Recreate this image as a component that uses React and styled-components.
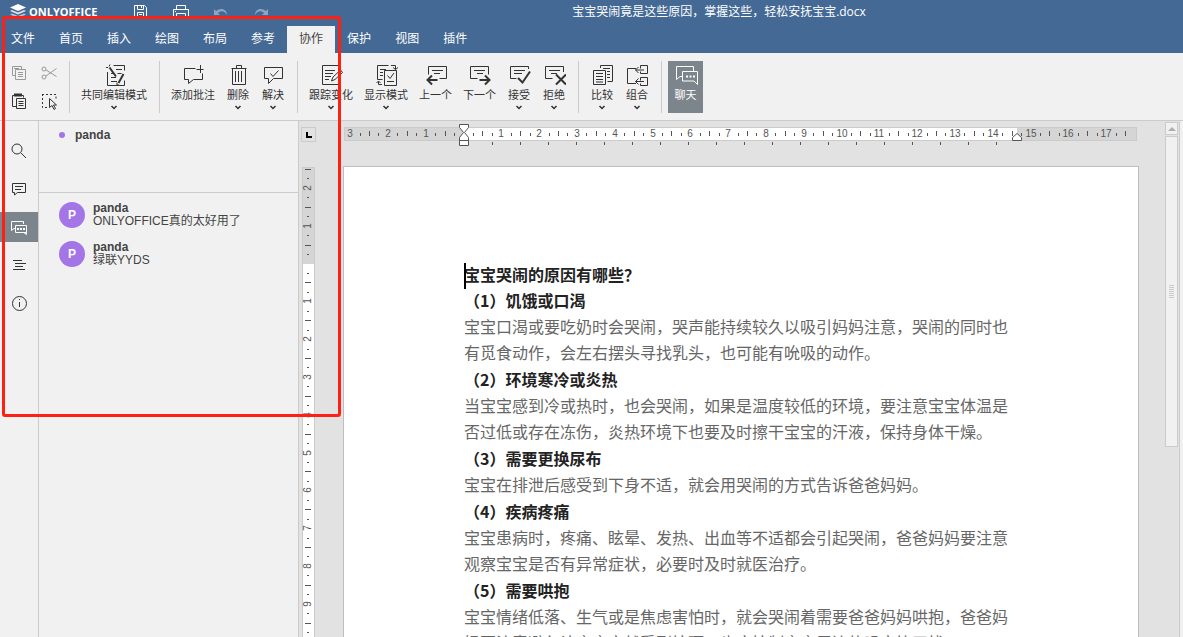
import React from "react"
import styled, { createGlobalStyle } from "styled-components"

const GlobalStyle = createGlobalStyle`
* {
    box-sizing: border-box;
}
body {
    margin: 0;
    background: #f1f1f1;
    color: #444;
    font: 12px "Liberation Sans", "Noto Sans CJK SC", sans-serif;
}
button {
    border: 0;
    padding: 0;
    background: none;
    color: inherit;
    font: inherit;
}
h1, h2, p, ul {
    margin: 0;
    padding: 0;
}
svg {
    display: block;
    fill: none;
    stroke: currentColor;
}
`

const TABS = ["文件", "首页", "插入", "绘图", "布局", "参考", "协作", "保护", "视图", "插件"]

const MESSAGES = [
    { user: "panda", text: "ONLYOFFICE真的太好用了" },
    { user: "panda", text: "绿联YYDS" },
]

const SECTIONS = [
    {
        title: "（1）饥饿或口渴",
        text: "宝宝口渴或要吃奶时会哭闹，哭声能持续较久以吸引妈妈注意，哭闹的同时也有觅食动作，会左右摆头寻找乳头，也可能有吮吸的动作。",
    },
    {
        title: "（2）环境寒冷或炎热",
        text: "当宝宝感到冷或热时，也会哭闹，如果是温度较低的环境，要注意宝宝体温是否过低或存在冻伤，炎热环境下也要及时擦干宝宝的汗液，保持身体干燥。",
    },
    {
        title: "（3）需要更换尿布",
        text: "宝宝在排泄后感受到下身不适，就会用哭闹的方式告诉爸爸妈妈。",
    },
    {
        title: "（4）疾病疼痛",
        text: "宝宝患病时，疼痛、眩晕、发热、出血等不适都会引起哭闹，爸爸妈妈要注意观察宝宝是否有异常症状，必要时及时就医治疗。",
    },
    {
        title: "（5）需要哄抱",
        text: "宝宝情绪低落、生气或是焦虑害怕时，就会哭闹着需要爸爸妈妈哄抱，爸爸妈妈要注意避免让宝宝突然受到惊吓，也应控制宝宝周边的噪音等干扰。",
    },
]

// 24x24 toolbar drawings
const icons = {
    coedit: (
        <>
            <path d="M11.5 2.5h11v5M5.5 9v13.5h17v-5M9 10.5h3M14 6.5h6M9 14.5h5M9 18.5h6M15.5 10.5h4" />
            <path d="M7.5 4.5l6.5 9M16.500 20l5-9" strokeWidth="2" />
            <path d="M4 4.5h2M8 1.5l-1 2M15 19.500v2.500h2" />
        </>
    ),
    addComment: <path d="M14.5 5.5h-11v11h4v4l5-4h9v-6M19.5 2v8M15.5 6.5h7" />,
    trash: <path d="M5.5 5.5h15M10.5 5.5v-3h5v3M6.5 5.5v16h13v-16M9.5 8v11M12.5 8v11M15.5 8v11" />,
    resolve: <path d="M3.5 4.5h18v11h-9l-5 5v-5h-4zM9.5 10.5l2.5 3 5.5-6" />,
    track: (
        <>
            <path d="M20.5 7v-4.5h-17v19h17v-5M6 7.5h10M6 10.5h8M6 13.5h6M6 16.5h4" />
            <path d="M12.5 18l1.5-4 7.5-7 2 2.500-7.500 7zM19.500 8.500l2.500 2.500" />
        </>
    ),
    display: (
        <path d="M14.5 2.5h-11v14h5M6 6.5h6M6 9.5h3M6 12.5h3M10.5 7.5h12v15h-12zM13.5 12.5l2.5 3 4-5.5M13 18.5h7M17 2.5h4.5v4M19 4.5l2.500 2 2.500-2M8 21.500h-3.500v-3M2.500 20l2-2 2 2" />
    ),
    prev: (
        <>
            <path d="M4.5 11.5v-8h18v12h-7M8 7.5h11M10 10.5h6" />
            <path d="M13.5 17h-10M8 12.5l-4.500 4.500 4.500 4.500" strokeWidth="2" />
        </>
    ),
    next: (
        <>
            <path d="M20.5 11.5v-8h-18v12h7M6 7.5h11M9 10.5h6" />
            <path d="M11.5 17h10M17 12.5l4.500 4.500-4.500 4.500" strokeWidth="2" />
        </>
    ),
    accept: (
        <>
            <path d="M21.5 6v-2.500h-18v12h6M7 7.500h11M7 10.500h8" />
            <path d="M11 15l4.500 4.500 7.500-11" strokeWidth="2" />
        </>
    ),
    reject: (
        <>
            <path d="M21.5 9v-5.500h-18v12h7M7 7.500h11M9 10.500h6" />
            <path d="M14 11.500l10 10M24 11.500l-10 10" strokeWidth="2" />
        </>
    ),
    compare: <path d="M10.5 5v-2.500h12v16h-5M13 5.500h7M17 8.500h3M17 11.500h3M17 14.500h3M3.500 7.500h12v14h-12zM6 10.500h7M6 13.500h7M6 16.500h7M6 19h7" />,
    combine: <path d="M11 5.500h-8.500v15h8.500M15.500 5.500v-3h7v8h-7v-2M15.500 17.500v-3h7v8h-7v-2M19 7h-8.500M13.500 4l-3 3 3 3M19 18.500h-8.500M13.500 15.500l-3 3 3 3" />,
    chat: (
        <>
            <path d="M19.500 8v-4.500h-17v13l3.500-3h2.500M8.500 8.500h15v13l-3.500-3.500h-11.500z" />
            <path d="M12 13.500h2M15.500 13.500h2M19 13.500h2" strokeWidth="2" />
        </>
    ),
}

const TOOL_GROUPS = [
    [{ icon: "coedit", label: "共同编辑模式", menu: true }],
    [
        { icon: "addComment", label: "添加批注" },
        { icon: "trash", label: "删除", menu: true },
        { icon: "resolve", label: "解决", menu: true },
    ],
    [
        { icon: "track", label: "跟踪变化", menu: true },
        { icon: "display", label: "显示模式", menu: true },
        { icon: "prev", label: "上一个" },
        { icon: "next", label: "下一个" },
        { icon: "accept", label: "接受", menu: true },
        { icon: "reject", label: "拒绝", menu: true },
    ],
    [
        { icon: "compare", label: "比较", menu: true },
        { icon: "combine", label: "组合", menu: true },
    ],
    [{ icon: "chat", label: "聊天", active: true }],
]

const SIDE_ITEMS = [
    { name: "查找", draw: <><circle cx="8" cy="8" r="5" /><path d="M12 12l5 5" /></> },
    { name: "批注", draw: <path d="M3.5 4.5h13v9h-8l-3 2.5v-2.5h-2zM6 7.5h8M6 10.5h6" /> },
    {
        name: "聊天",
        active: true,
        draw: (
            <>
                <path d="M14.5 7v-2.5h-12v9l2.500-2h1.500M6.500 8.500h11v7h-11zM14.500 15.500l3 2v-2" />
                <path d="M8 12h2M11 12h2M14 12h2" strokeWidth="2" />
            </>
        ),
    },
    { name: "标题", draw: <path d="M4 5.500h9M6 8.500h11M6 11.500h8M4 14.500h12" /> },
    { name: "关于", draw: <><circle cx="10.5" cy="10.5" r="7" /><path d="M10.5 9v5M10.500 6v1" /></> },
]

const App = () => (
    <Editor>
        <GlobalStyle />
        <Header>
            <TitleRow>
                <Logo>
                    <svg width="16" height="16" viewBox="0 0 16 16">
                        <g fill="#fff" stroke="none">
                            <path d="M8 1l8 3.500-8 3.500-8-3.500z" />
                            <path d="M0 8l2-1 6 2.500 6-2.500 2 1-8 3.500z" opacity=".8" />
                            <path d="M0 11.500l2-1 6 2.500 6-2.500 2 1-8 3.500z" opacity=".6" />
                        </g>
                    </svg>
                    ONLYOFFICE
                </Logo>
                <QuickButtons>
                    <button aria-label="保存">
                        <svg width="18" height="18" viewBox="0 0 18 18">
                            <path d="M2.500 2.500h10l2 2v11h-12zM5.500 2.500v4h6v-4M9.500 3v2M5.500 15.500v-6h6v6M7 11.500h3M7 13.500h3" />
                        </svg>
                    </button>
                    <button aria-label="打印">
                        <svg width="18" height="18" viewBox="0 0 18 18">
                            <path d="M4.500 6.500v-4h9v4M4.500 13.500h-3v-7h15v7h-3M4.500 10.500h9v5h-9zM3 8.500h1" />
                        </svg>
                    </button>
                    <button aria-label="撤销" disabled>
                        <svg width="18" height="18" viewBox="0 0 18 18">
                            <path d="M2 6v6h6L6 10c3-3 7-2 9 2 0-6-6-8-11-4z" fill="currentColor" stroke="none" />
                        </svg>
                    </button>
                    <button aria-label="重做" disabled>
                        <svg width="18" height="18" viewBox="0 0 18 18">
                            <path d="M16 6v6h-6l2-2c-3-3-7-2-9 2 0-6 6-8 11-4z" fill="currentColor" stroke="none" />
                        </svg>
                    </button>
                </QuickButtons>
                <DocName>宝宝哭闹竟是这些原因，掌握这些，轻松安抚宝宝.docx</DocName>
            </TitleRow>
            <Tabs>
                {TABS.map((tab) => <Tab key={tab} $active={tab === "协作"}>{tab}</Tab>)}
            </Tabs>
        </Header>

        <Toolbar>
            <ClipboardGroup>
                <SmallButton aria-label="复制" disabled>
                    <svg width="20" height="20" viewBox="0 0 20 20">
                        <path d="M6 12.500h-2.500v-9h9v2.500M6.500 6.500h10v10h-10zM5 5.500h5M9 9.500h5M9 11.500h5M9 13.500h5" />
                    </svg>
                </SmallButton>
                <SmallButton aria-label="剪切" disabled>
                    <svg width="20" height="20" viewBox="0 0 20 20">
                        <circle cx="5" cy="6" r="2" />
                        <circle cx="5" cy="14" r="2" />
                        <path d="M7 7l10.500 6.500M7 13l10.500-7.500" />
                    </svg>
                </SmallButton>
                <SmallButton aria-label="粘贴">
                    <svg width="20" height="20" viewBox="0 0 20 20">
                        <path d="M7 15.500h-3.500v-11h11v2M7.500 7.500h9v10h-9zM9.500 10.500h5M9.500 12.500h5M9.500 14.500h5" />
                        <path d="M5 4h8" strokeWidth="3" />
                    </svg>
                </SmallButton>
                <SmallButton aria-label="全选">
                    <svg width="20" height="20" viewBox="0 0 20 20">
                        <path d="M3 3.500h14v4M3.500 3v13.500h6" strokeDasharray="2 2" />
                        <path d="M10.500 7.500v9l2.500-2 2 4 1.500-1-2-3.500h3z" />
                    </svg>
                </SmallButton>
            </ClipboardGroup>
            {TOOL_GROUPS.map((group, i) => (
                <ToolGroup key={i}>
                    {group.map((tool) => (
                        <ToolButton key={tool.label} $active={tool.active}>
                            <svg width="24" height="24" viewBox="0 0 24 24">{icons[tool.icon]}</svg>
                            <span>{tool.label}</span>
                            {tool.menu && (
                                <svg width="8" height="5" viewBox="0 0 8 5"><path d="M1.5 1L4 3.500 6.500 1" strokeWidth="1.500" /></svg>
                            )}
                        </ToolButton>
                    ))}
                </ToolGroup>
            ))}
        </Toolbar>

        <Body>
            <SideMenu>
                {SIDE_ITEMS.map((item) => (
                    <SideButton key={item.name} aria-label={item.name} $active={item.active}>
                        <svg width="20" height="20" viewBox="0 0 20 20">{item.draw}</svg>
                    </SideButton>
                ))}
            </SideMenu>
            <ChatPanel>
                <Users>
                    <User>panda</User>
                </Users>
                <Messages>
                    {MESSAGES.map((m) => (
                        <Message key={m.text}>
                            <Avatar>P</Avatar>
                            <div>
                                <b>{m.user}</b>
                                <p>{m.text}</p>
                            </div>
                        </Message>
                    ))}
                </Messages>
            </ChatPanel>
            <RulerColumn>
                <TabStop aria-label="制表符">
                    <svg width="6" height="6" viewBox="0 0 6 6"><path d="M1 0v5h5" stroke="#000" strokeWidth="2" /></svg>
                </TabStop>
                <VerticalRuler />
            </RulerColumn>
            <Canvas>
                <HorizontalRuler />
                <Page>
                    <Caret />
                    <h1>宝宝哭闹的原因有哪些？</h1>
                    {SECTIONS.map((s) => (
                        <Section key={s.title}>
                            <h2>{s.title}</h2>
                            <p>{s.text}</p>
                        </Section>
                    ))}
                </Page>
            </Canvas>
            <ScrollBar>
                <ScrollUp aria-label="向上滚动">
                    <svg width="8" height="4" viewBox="0 0 8 4"><path d="M4 0l4 4H0z" fill="#adadad" stroke="none" /></svg>
                </ScrollUp>
                <Thumb>
                    <svg width="5" height="13" viewBox="0 0 5 13">
                        <path d="M0 .5h5M0 2.5h5M0 4.5h5M0 6.5h5M0 8.5h5M0 10.5h5M0 12.5h5" />
                    </svg>
                </Thumb>
            </ScrollBar>
            <RightEdge />
        </Body>
        <Highlight />
    </Editor>
)

export default App

const CM = 37.8

// every quarter of a centimetre from first to last: number, long or short tick
function rulerMarks(first, last) {
    const marks = []
    for (let q = first * 4; q <= last * 4; q++) {
        if (q === 0) continue
        const kind = q % 4 === 0 ? "number" : q % 2 === 0 ? "long" : "short"
        marks.push({ kind, pos: Math.floor((q * CM) / 4), n: Math.abs(q / 4) })
    }
    return marks
}

function HorizontalRuler() {
    const zero = 121
    return (
        <RulerSvg width="796" height="30" viewBox="0 0 796 30">
            <rect x="1.5" y="6.5" width="792" height="13" fill="#d5d5d5" stroke="#cbcbcb" />
            <rect x={zero} y="7" width="553" height="12" fill="#fff" />
            {rulerMarks(-3, 17.5).map((m) =>
                m.kind === "number" ? (
                    <text key={m.pos} x={zero + m.pos} y="16" textAnchor="middle">{m.n}</text>
                ) : (
                    <rect key={m.pos} x={zero + m.pos} y={m.kind === "long" ? 10 : 12} width="1" height={m.kind === "long" ? 5 : 3} fill="#555" />
                )
            )}
            {Array.from({ length: 19 }, (_, i) => (
                <rect key={i} x={zero + (i + 1) * 28} y="21" width="1" height="3" fill="#555" />
            ))}
            <path d="M116.5 3.5h9v3l-4 5 4 5v3h-9v-3l4-5-4-5zM116.5 19.5h9v5h-9z" fill="#fff" stroke="#555" />
            <path d="M669.5 19.5v-3l4.5-4 4.5 4v3z" fill="#fff" stroke="#555" />
        </RulerSvg>
    )
}

function VerticalRuler() {
    const zero = 97
    // only the part that the window can show
    const height = Math.max(zero, window.innerHeight - 167)
    const last = Math.floor(((height - zero - 4) / CM) * 4) / 4
    return (
        <RulerSvg width="13" height={height}>
            <rect x=".5" y=".5" width="12" height="1122" fill="#d5d5d5" stroke="#cbcbcb" />
            <rect x="1" y={zero} width="11" height="930" fill="#fff" />
            {rulerMarks(-2.5, Math.min(last, 24)).map((m) =>
                m.kind === "number" ? (
                    <text key={m.pos} transform={`translate(9 ${zero + m.pos}) rotate(-90)`} textAnchor="middle">{m.n}</text>
                ) : (
                    <rect key={m.pos} x={m.kind === "long" ? 3 : 5} y={zero + m.pos} width={m.kind === "long" ? 6 : 2} height="1" fill="#555" />
                )
            )}
        </RulerSvg>
    )
}

const Editor = styled.div`
position: relative;
display: flex;
flex-direction: column;
height: 100vh;
overflow: hidden;
`

const Header = styled.header`
flex: none;
background: #446995;
color: #fff;
`

const TitleRow = styled.div`
display: flex;
height: 26px;
padding-left: 10px;
`

const Logo = styled.div`
display: flex;
align-items: center;
gap: 3px;
width: 122px;
height: 22px;
font: bold 11px "Open Sans", sans-serif;
`

const QuickButtons = styled.div`
display: flex;
gap: 22px;
height: 24px;
button {
    width: 18px;
}
button:disabled {
    opacity: .4;
}
`

const DocName = styled.div`
flex: 1;
padding-right: 15px;
line-height: 24px;
text-align: center;
font-family: "Open Sans", "Noto Sans CJK SC", sans-serif;
`

const Tabs = styled.nav`
display: flex;
margin-left: -1px;
`

const Tab = styled.button`
height: 27px;
padding: 0 12px 1px;
line-height: 24px;
background: ${(props) => (props.$active ? "#f1f1f1" : "none")};
color: ${(props) => (props.$active ? "#444" : "#fff")};
`

const Toolbar = styled.div`
display: flex;
flex: none;
align-items: flex-start;
height: 68px;
padding-top: 8px;
border-bottom: 1px solid #cbcbcb;
`

const ClipboardGroup = styled.div`
display: grid;
grid-template-columns: 20px 20px;
gap: 8px 10px;
height: 52px;
padding: 2px 10px 2px 9px;
border-right: 1px solid #cbcbcb;
`

const SmallButton = styled.button`
height: 20px;
color: ${(props) => (props.disabled ? "#999" : "#333")};
`

const ToolGroup = styled.div`
display: flex;
gap: 1px;
height: 52px;
padding: 0 7px 0 6px;
border-right: 1px solid #cbcbcb;
&:last-child {
    border-right: 0;
}
`

const ToolButton = styled.button`
display: flex;
flex-direction: column;
align-items: center;
min-width: ${(props) => (props.$active ? "35px" : "34px")};
height: 52px;
padding: 2px 5px 0;
background: ${(props) => (props.$active ? "#7d858c" : "none")};
color: ${(props) => (props.$active ? "#fff" : "#333")};
span {
    margin: 1px 0 3px;
    font-size: 11px;
    line-height: 14px;
    white-space: nowrap;
}
`

const Body = styled.div`
display: flex;
flex: 1;
min-height: 0;
`

const SideMenu = styled.nav`
display: flex;
flex-direction: column;
gap: 8px;
width: 39px;
padding-top: 15px;
border-right: 1px solid #cbcbcb;
`

const SideButton = styled.button`
height: 30px;
padding-left: 9px;
background: ${(props) => (props.$active ? "#7d858c" : "none")};
color: ${(props) => (props.$active ? "#fff" : "#333")};
`

const ChatPanel = styled.aside`
width: 260px;
border-right: 1px solid #cbcbcb;
`

const Users = styled.ul`
height: 72px;
padding: 7px 20px;
border-bottom: 1px solid #cbcbcb;
list-style: none;
`

const User = styled.li`
display: flex;
align-items: center;
gap: 10px;
font-weight: bold;
line-height: 14px;
&::before {
    content: "";
    width: 6px;
    height: 6px;
    border-radius: 50%;
    background: #a375e6;
}
`

const Messages = styled.div`
display: flex;
flex-direction: column;
gap: 13px;
padding: 9px 20px;
`

const Message = styled.div`
display: flex;
gap: 8px;
height: 26px;
line-height: 13px;
b {
    display: block;
}
`

const Avatar = styled.div`
width: 26px;
height: 26px;
border-radius: 50%;
background: #a375e6;
color: #fff;
font-weight: bold;
line-height: 26px;
text-align: center;
`

const RulerColumn = styled.div`
display: flex;
flex-direction: column;
align-items: flex-start;
gap: 25px;
width: 18px;
padding: 6px 0 0 2px;
overflow: hidden;
background: #e2e2e2;
> svg {
    margin-left: 1px;
}
`

const TabStop = styled.button`
display: flex;
flex: none;
align-items: center;
justify-content: center;
width: 15px;
height: 15px;
border: 1px solid #cbcbcb;
`

const RulerSvg = styled.svg`
flex: none;
stroke: none;
shape-rendering: crispEdges;
text {
    fill: #555;
    font-size: 10px;
}
path {
    shape-rendering: auto;
}
`

const Canvas = styled.main`
display: flex;
flex: 1;
flex-direction: column;
align-items: center;
gap: 15px;
min-width: 0;
overflow: hidden;
background: #e2e2e2;
`

const Page = styled.article`
position: relative;
flex: none;
width: 796px;
min-height: 1123px;
padding: 94px 120px;
border: 1px solid #bbbec2;
background: #fff;
color: #666;
font: 16px/26px "Noto Sans CJK SC", sans-serif;
h1, h2 {
    color: #222;
    font-size: 16px;
    font-weight: bold;
}
`

const Section = styled.section`
padding-bottom: 1px;
`

const Caret = styled.i`
position: absolute;
top: 96px;
left: 120px;
width: 2px;
height: 26px;
background: #000;
`

const ScrollBar = styled.div`
display: flex;
flex-direction: column;
gap: 1px;
width: 14px;
padding: 1px 1px 0 0;
background: #e2e2e2;
`

const ScrollUp = styled.button`
display: flex;
align-items: center;
justify-content: center;
height: 13px;
border: 1px solid #cbcbcb;
background: #f1f1f1;
`

const Thumb = styled.div`
display: flex;
align-items: center;
justify-content: center;
height: 311px;
border: 1px solid #cbcbcb;
background: #f1f1f1;
color: #cbcbcb;
`

const RightEdge = styled.div`
width: 4px;
border-left: 1px solid #cbcbcb;
`

// red frame over the area being pointed out
const Highlight = styled.div`
position: absolute;
top: 16px;
left: 2px;
width: 339px;
height: 401px;
border: 3px solid #ff2014;
border-radius: 3px;
pointer-events: none;
`
